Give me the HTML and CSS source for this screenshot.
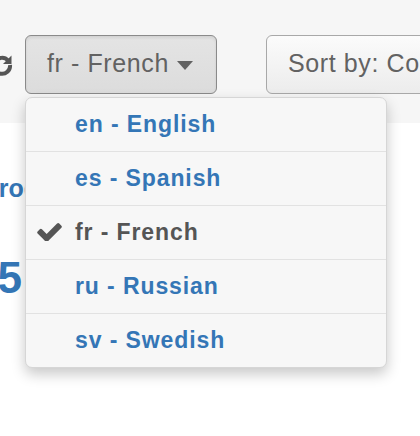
FILE: index.html
```html
<!DOCTYPE html>
<html lang="en">
<head>
<meta charset="utf-8">
<title>Language menu</title>
<link rel="stylesheet" href="styles.css">
</head>
<body>
<div class="page">
  <div class="toolbar">
    <span class="refresh" aria-hidden="true">
      <svg width="22" height="22" viewBox="0 0 22 22">
        <path d="M17 6.5 A8 8 0 1 0 19 11" fill="none" stroke="#555" stroke-width="4"/>
        <path d="M20.5 1.5 L20.5 10 L12 10 Z" fill="#555"/>
      </svg>
    </span>
    <div class="lang-wrap">
      <button class="btn btn-active" type="button">fr - French <span class="caret"></span></button>
      <ul class="menu">
        <li class="item"><a href="#">en - English</a></li>
        <li class="item"><a href="#">es - Spanish</a></li>
        <li class="item item-current">
          <svg class="check" width="25" height="19" viewBox="110 290 1570 1150"><path d="M1671 566q0 40-28 68l-724 724-136 136q-28 28-68 28t-68-28l-136-136-362-362q-28-28-28-68t28-68l136-136q28-28 68-28t68 28l294 295 656-657q28-28 68-28t68 28l136 136q28 28 28 68z" fill="#555"/></svg>
          <span>fr - French</span>
        </li>
        <li class="item"><a href="#">ru - Russian</a></li>
        <li class="item"><a href="#">sv - Swedish</a></li>
      </ul>
    </div>
    <button class="btn btn-sort" type="button">Sort by: Code</button>
  </div>
  <div class="content">
    <p class="label">Progress</p>
    <p class="num">15</p>
  </div>
</div>
</body>
</html>
```
FILE: styles.css
```css
html, body {
  margin: 0;
  padding: 0;
  height: 100%;
}
body {
  background: #ffffff;
  font-family: "Liberation Sans", Arial, sans-serif;
  overflow: hidden;
}
.page {
  width: 420px;
  height: 436px;
  overflow: hidden;
  display: flex;
  flex-direction: column;
}
.toolbar {
  background: #f6f6f6;
  height: 123px;
  box-sizing: border-box;
  padding-top: 35px;
  display: flex;
  align-items: flex-start;
  flex: none;
}
.refresh {
  display: block;
  width: 22px;
  height: 22px;
  margin-left: -9px;
  margin-top: 19px;
  margin-right: 12px;
  flex: none;
}
.refresh svg { display: block; }
.lang-wrap {
  position: relative;
  flex: none;
  z-index: 2;
}
.btn {
  height: 59px;
  box-sizing: border-box;
  border-radius: 6px;
  font-family: "Liberation Sans", Arial, sans-serif;
  font-size: 25px;
  letter-spacing: 0.6px;
  color: #626262;
  display: flex;
  align-items: center;
  padding: 0 0 2px 21px;
  margin: 0;
  white-space: nowrap;
}
.btn-active {
  width: 192px;
  border: 1.5px solid #8a8a8a;
  background: linear-gradient(#e4e4e4, #dcdcdc);
  box-shadow: inset 0 2px 3px rgba(0,0,0,0.08);
}
.caret {
  display: inline-block;
  margin-left: 8px;
  margin-top: 3px;
  width: 0;
  height: 0;
  border-left: 8px solid transparent;
  border-right: 8px solid transparent;
  border-top: 9px solid #626262;
}
.btn-sort {
  flex: none;
  width: 220px;
  margin-left: 49px;
  border: 1.5px solid #a8a8a8;
  background: linear-gradient(#fbfbfb, #ececec);
  padding-left: 21px;
}
.menu {
  position: absolute;
  left: 0;
  top: 62px;
  width: 362px;
  box-sizing: border-box;
  margin: 0;
  padding: 0;
  list-style: none;
  background: #f7f7f7;
  border: 1px solid #d6d6d6;
  border-radius: 7px;
  box-shadow: 0 6px 14px rgba(0,0,0,0.22);
}
.item {
  position: relative;
  padding: 1px 0 0 49px;
  height: 52px;
  line-height: 51px;
  font-size: 23px;
  font-weight: bold;
  letter-spacing: 0.9px;
  white-space: nowrap;
}
.item + .item {
  border-top: 1.5px solid #e2e2e2;
}
.item a {
  color: #3476b6;
  text-decoration: none;
}
.item-current {
  color: #555;
}
.check {
  position: absolute;
  left: 11px;
  top: 16px;
}
.content {
  flex: 1;
  background: #ffffff;
  padding-top: 50px;
  position: relative;
  z-index: 1;
}
.label {
  margin: 0 0 0 -18px;
  font-size: 25px;
  line-height: 30px;
  font-weight: bold;
  color: #3476b6;
  white-space: nowrap;
}
.num {
  margin: 50px 0 0 -27px;
  font-size: 44px;
  line-height: 50px;
  font-weight: bold;
  color: #3476b6;
}
```
